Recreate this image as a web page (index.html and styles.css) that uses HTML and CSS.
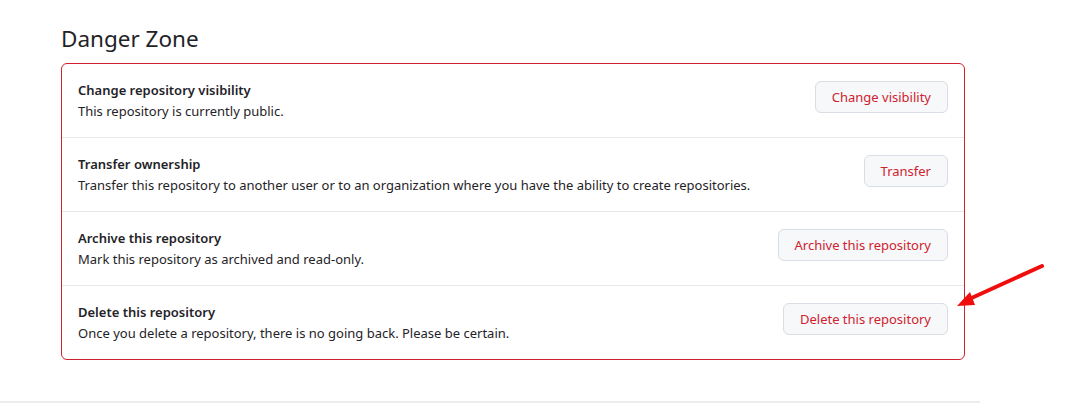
FILE: index.html
```html
<!DOCTYPE html>
<html>
<head>
<meta charset="utf-8">
<link rel="stylesheet" href="styles.css">
</head>
<body>
<div class="page">
  <h2 class="title">Danger Zone</h2>
  <div class="zone">
    <div class="row">
      <div class="info">
        <div class="name">Change repository visibility</div>
        <div class="desc">This repository is currently public.</div>
      </div>
      <button class="btn">Change visibility</button>
    </div>
    <div class="row">
      <div class="info">
        <div class="name">Transfer ownership</div>
        <div class="desc">Transfer this repository to another user or to an organization where you have the ability to create repositories.</div>
      </div>
      <button class="btn">Transfer</button>
    </div>
    <div class="row">
      <div class="info">
        <div class="name">Archive this repository</div>
        <div class="desc">Mark this repository as archived and read-only.</div>
      </div>
      <button class="btn">Archive this repository</button>
    </div>
    <div class="row">
      <div class="info">
        <div class="name">Delete this repository</div>
        <div class="desc">Once you delete a repository, there is no going back. Please be certain.</div>
      </div>
      <button class="btn">Delete this repository</button>
    </div>
  </div>
  <div class="rule"></div>
</div>
<svg class="arrow" width="100" height="60" viewBox="0 0 100 60">
  <line x1="92" y1="11" x2="15" y2="46" stroke="#f00d0d" stroke-width="4" stroke-linecap="round"/>
  <polygon points="7,51 20,37 25,50" fill="#f00d0d"/>
</svg>
</body>
</html>
```
FILE: styles.css
```css
html, body { margin: 0; padding: 0; background: #fff; }
body {
  font-family: "Noto Sans", "Liberation Sans", sans-serif;
  color: #1f2328;
  position: relative;
  width: 1087px;
  height: 414px;
  overflow: hidden;
}
.page { padding-top: 24px; }
.title {
  margin: 0 0 9px 61px;
  font-size: 22.5px;
  font-weight: 400;
  line-height: 30px;
  color: #1f2328;
}
.zone {
  margin-left: 61px;
  width: 902px;
  border: 1px solid #cf222e;
  border-radius: 6px;
}
.row {
  display: flex;
  align-items: flex-start;
  justify-content: space-between;
  padding: 16px;
  height: 41px;
  border-top: 1px solid #e6e9ec;
}
.row:first-child { border-top: none; }
.name { font-size: 13px; font-weight: 600; line-height: 21px; }
.desc { font-size: 13px; line-height: 21px; }
.btn {
  margin-top: 1px;
  font-family: inherit;
  font-size: 13px;
  color: #cf222e;
  background: #f6f8fa;
  border: 1px solid #d8dee4;
  border-radius: 6px;
  height: 32px;
  padding: 0 16px;
}
.rule {
  margin-top: 41px;
  width: 980px;
  height: 2px;
  background: #ececec;
}
.arrow { position: absolute; left: 950px; top: 255px; }
```
